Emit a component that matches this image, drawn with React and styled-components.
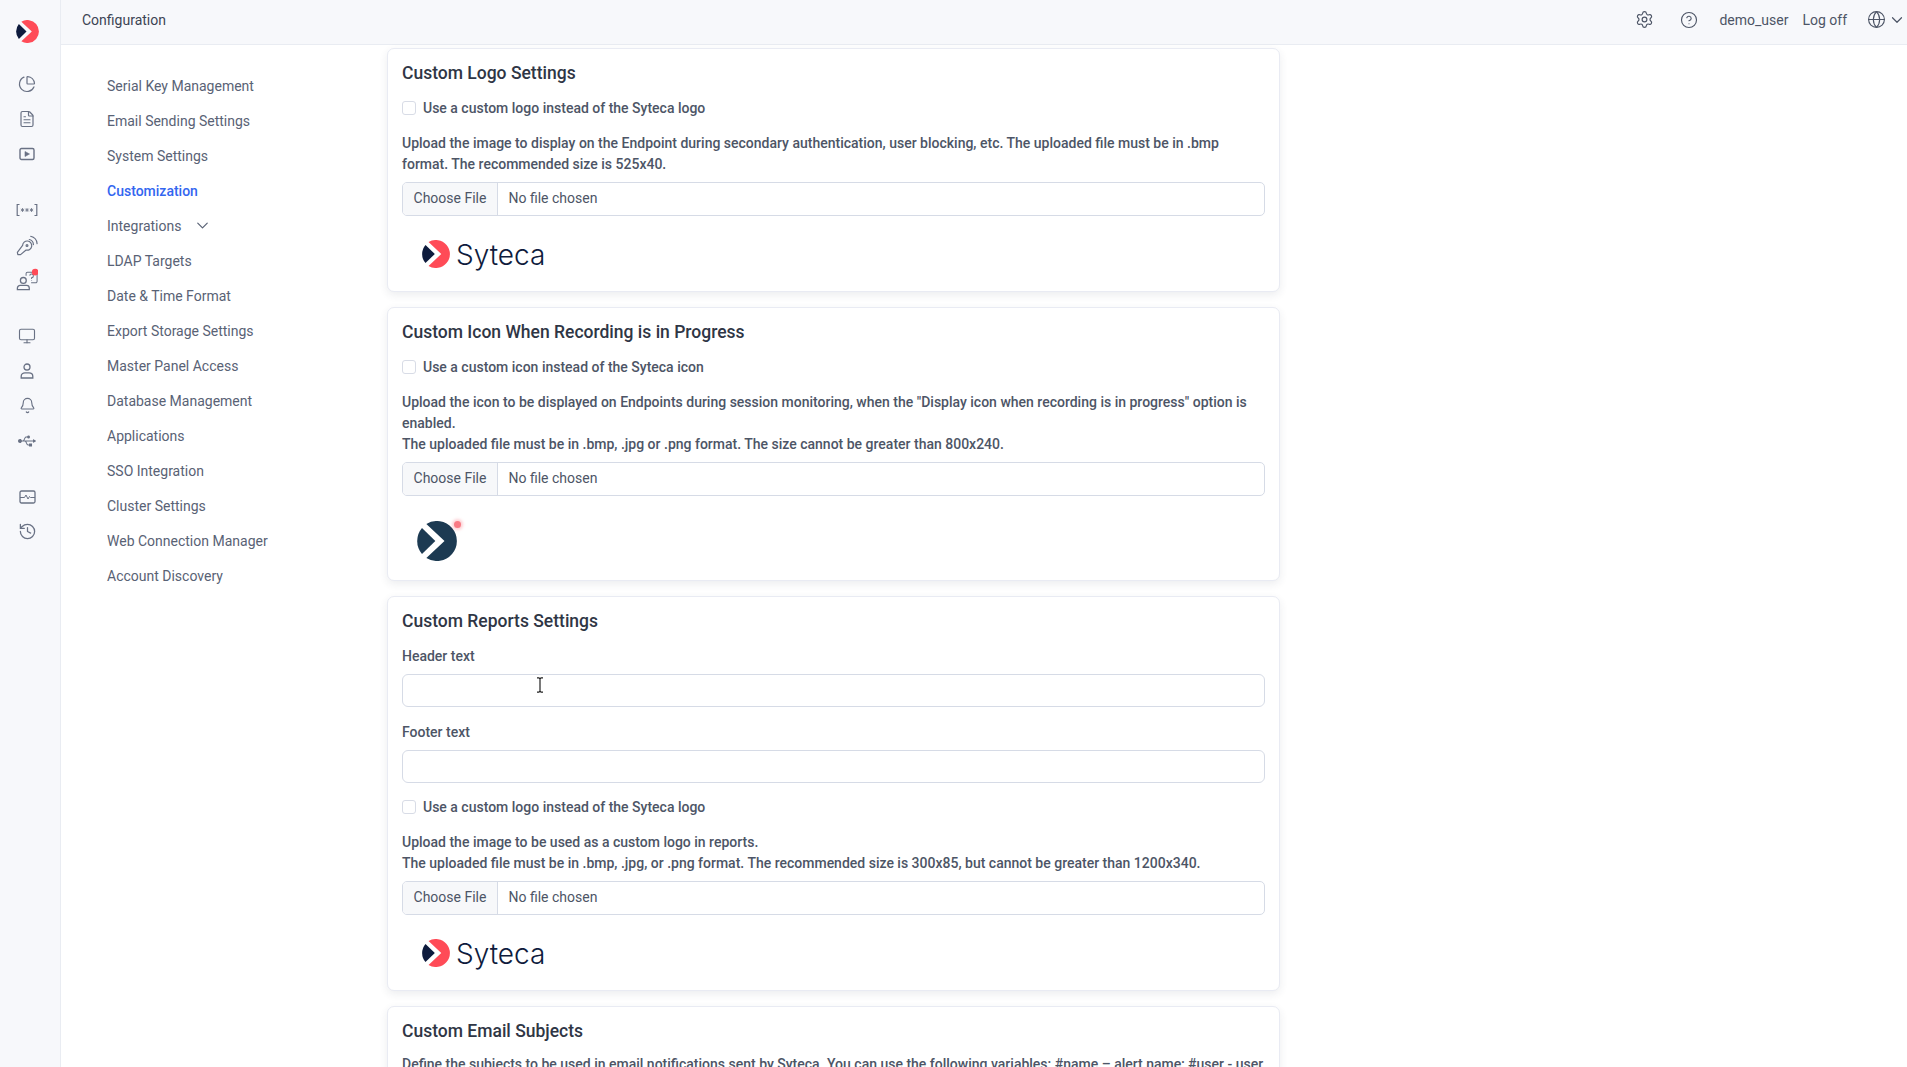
import React from "react";
import styled, { createGlobalStyle } from "styled-components";
import {
    ChartPie,
    FileText,
    Monitor,
    Bell,
    History,
    Settings,
    CircleHelp,
    Globe,
    ChevronDown,
} from "lucide-react";
import { FaUsb } from "react-icons/fa";

const GlobalStyle = createGlobalStyle`
    html, body {
        margin: 0;
        height: 100%;
        overflow: hidden;
        background: #fff;
        font-family: Roboto, "Liberation Sans", sans-serif;
        font-size: 14px;
    }
    * {
        box-sizing: border-box;
    }
`;

const Page = styled.div`
    display: flex;
    height: 100vh;
    overflow: hidden;
`;

const Sidebar = styled.aside`
    width: 61px;
    flex-shrink: 0;
    background: #f7f8fb;
    border-right: 1px solid #e9ecf2;
    padding: 20px 6px 0 0;
    display: flex;
    flex-direction: column;
    align-items: center;
`;

const SideGroup = styled.div`
    display: flex;
    flex-direction: column;
    align-items: center;
    margin-top: ${(props) => props.$top || 21}px;
`;

const SideIcon = styled.div`
    width: 30px;
    height: 35px;
    display: flex;
    align-items: center;
    justify-content: center;
    color: #697184;
`;

const Main = styled.div`
    flex: 1;
    min-width: 0;
    display: flex;
    flex-direction: column;
`;

const Header = styled.header`
    height: 45px;
    flex-shrink: 0;
    background: #f7f8fb;
    border-bottom: 1px solid #e9ecf2;
    display: flex;
    align-items: center;
    justify-content: space-between;
    padding: 0 1px 5px 21px;
    color: #3c4454;
`;

const HeaderRight = styled.div`
    display: flex;
    align-items: center;
    color: #4d5566;
`;

const HeaderIcon = styled.span`
    display: flex;
    margin-right: ${(props) => props.$right}px;
    color: #4d5566;
`;

const HeaderText = styled.span`
    margin-right: ${(props) => props.$right}px;
`;

const Body = styled.div`
    flex: 1;
    min-height: 0;
    display: flex;
`;

const Nav = styled.nav`
    width: 326px;
    flex-shrink: 0;
    padding: 23px 0 0 46px;
`;

const NavItem = styled.div`
    height: 35px;
    display: flex;
    align-items: center;
    gap: 12px;
    color: ${(props) => (props.$active ? "#3366f0" : "#596275")};
    font-weight: ${(props) => (props.$active ? 500 : 400)};
`;

const Content = styled.div`
    width: 893px;
    padding-top: 3px;
    display: flex;
    flex-direction: column;
    gap: 15px;
`;

const Card = styled.section`
    flex-shrink: 0;
    background: #fff;
    border: 1px solid #e9ebf3;
    border-radius: 7px;
    box-shadow: 0 3px 9px rgba(40, 50, 80, 0.09);
    padding: 0 14px;
`;

const Title = styled.h2`
    margin: 0;
    height: 41px;
    padding-top: 12px;
    line-height: 24px;
    font-size: 17.5px;
    font-weight: 500;
    color: #2f3645;
`;

const CheckRow = styled.label`
    height: 35px;
    margin-top: ${(props) => props.$top || 0}px;
    display: flex;
    align-items: center;
    gap: 7px;
    font-weight: 500;
    color: #4d5566;
`;

const Check = styled.input.attrs({ type: "checkbox" })`
    appearance: none;
    width: 14px;
    height: 14px;
    margin: 0;
    background: #fff;
    border: 1px solid #d8dce6;
    border-radius: 3px;
`;

const Text = styled.p`
    margin: ${(props) => props.$top || 7.5}px 0 7px;
    line-height: 21px;
    font-weight: 500;
    color: #4d5566;
`;

const FileField = styled.label`
    display: flex;
    height: 34px;
    border: 1px solid #d6dbe6;
    border-radius: 5px;
    overflow: hidden;
    color: #4d5566;
`;

const FileButton = styled.span`
    width: 95px;
    padding-bottom: 2px;
    display: flex;
    align-items: center;
    justify-content: center;
    background: #f7f8fa;
    border-right: 1px solid #d6dbe6;
`;

const FileName = styled.span`
    display: flex;
    align-items: center;
    padding: 0 0 2px 10.5px;
`;

const LogoRow = styled.div`
    height: 75.5px;
    padding: 24px 0 0 20px;
    display: flex;
    align-items: flex-start;
    gap: 6px;
`;

const LogoWord = styled.span`
    font-family: Inter, sans-serif;
    font-size: 28px;
    font-weight: 300;
    line-height: 31px;
    color: #0e1b3d;
`;

const RecordIcon = styled.div`
    position: relative;
    width: 40px;
    height: 41px;
    margin: 25.5px 0 18px 15px;
`;

const RecordDot = styled.span`
    position: absolute;
    top: 0;
    right: -4px;
    width: 7px;
    height: 7px;
    border-radius: 50%;
    background: #f97a84;
    box-shadow: 0 0 3px 2px rgba(248, 96, 108, 0.3);
`;

const FieldLabel = styled.div`
    height: 35px;
    line-height: 35px;
    margin-top: ${(props) => props.$top || 0}px;
    font-weight: 500;
    color: #4d5566;
`;

const InputWrap = styled.div`
    position: relative;
`;

const TextInput = styled.input`
    display: block;
    width: 100%;
    height: 33.5px;
    background: #fff;
    border: 1px solid #d6dbe6;
    border-radius: 6px;
    outline: none;
`;

const Cursor = styled.svg`
    position: absolute;
    left: 134px;
    top: 3px;
`;

const LogoMark = ({ size, left = "#0e1b3d", right = "#ff4b57" }) => (
    <svg width={size} height={size} viewBox="0 0 24 24">
        <path d="M3 4.2L11 12L3 19.8A12 12 0 0 1 3 4.2Z" fill={left} />
        <path d="M5.6 1.8A12 12 0 1 1 5.6 22.2L16.5 12Z" fill={right} />
    </svg>
);

const PlayIcon = () => (
    <svg width="16" height="14" viewBox="0 0 16 14" fill="none" stroke="currentColor" strokeWidth="1.4">
        <rect x="1" y="1.5" width="14" height="11" rx="1.5" />
        <path d="M6 4.5L10.5 7L6 9.5Z" fill="currentColor" strokeWidth="0.6" />
    </svg>
);

const VaultIcon = () => (
    <svg width="22" height="14" viewBox="0 0 22 14" fill="none" stroke="currentColor" strokeWidth="1.2">
        <path d="M3.5 1.5H1.2V12.5H3.5M18.5 1.5H20.8V12.5H18.5" />
        <path d="M6.5 5V9M4.8 6L8.2 8M8.2 6L4.8 8M11 5V9M9.3 6L12.7 8M12.7 6L9.3 8M15.5 5V9M13.8 6L17.2 8M17.2 6L13.8 8" strokeWidth="0.8" />
    </svg>
);

const KeyIcon = () => (
    <svg width="22" height="22" viewBox="0 0 24 24" fill="none" stroke="currentColor" strokeWidth="1.3" strokeLinejoin="round">
        <path d="M1.5 20L2 22.5L5 22.5L11 17.5A5 5 0 1 0 7.2 12.5Z" />
        <circle cx="12" cy="12.5" r="1" />
        <path d="M14.5 6A6 6 0 0 1 19 11.5M16 2.5A9 9 0 0 1 23 10.5" strokeLinecap="round" />
    </svg>
);

const AskIcon = () => (
    <svg width="22" height="23" viewBox="0 0 24 24" fill="none" stroke="currentColor" strokeWidth="1.4">
        <circle cx="8" cy="13" r="3.2" />
        <path d="M1.5 23V21.5A3 3 0 0 1 4.5 18.5H11.5A3 3 0 0 1 14.5 21.5V23Z" />
        <path d="M11 8V5.5A1.5 1.5 0 0 1 12.5 4H21.5A1.5 1.5 0 0 1 23 5.5V14A1.5 1.5 0 0 1 21.5 15.5H16.5" strokeWidth="1.1" />
        <path d="M15 7.8A2 2 0 1 1 17 10V11.5M17 13V13.6" strokeWidth="1.1" />
        <circle cx="21" cy="4" r="3.6" fill="#ff4b57" stroke="none" />
    </svg>
);

const UserIcon = () => (
    <svg width="16" height="16" viewBox="0 0 16 16" fill="none" stroke="currentColor" strokeWidth="1.3">
        <circle cx="8" cy="4" r="3" />
        <path d="M2.2 15V13.2C2.2 11 4 9.8 6 9.8H10C12 9.8 13.8 11 13.8 13.2V15Z" />
    </svg>
);

const PulseIcon = () => (
    <svg width="17" height="14" viewBox="0 0 17 14" fill="none" stroke="currentColor" strokeWidth="1.3">
        <rect x="1" y="1" width="15" height="12" rx="1.5" />
        <path d="M1 7.5H5.5L7 5L9 9L10.5 6.5L11.5 7.5H16" strokeWidth="1" />
    </svg>
);

const LogoBlock = () => (
    <LogoRow>
        <LogoMark size={28} />
        <LogoWord>Syteca</LogoWord>
    </LogoRow>
);

const FileInput = () => (
    <FileField>
        <FileButton>Choose File</FileButton>
        <FileName>No file chosen</FileName>
    </FileField>
);

const navItems = [
    "Serial Key Management",
    "Email Sending Settings",
    "System Settings",
    "Customization",
    "Integrations",
    "LDAP Targets",
    "Date & Time Format",
    "Export Storage Settings",
    "Master Panel Access",
    "Database Management",
    "Applications",
    "SSO Integration",
    "Cluster Settings",
    "Web Connection Manager",
    "Account Discovery",
];

const App = () => {
    return (
        <Page>
            <GlobalStyle />
            <Sidebar>
                <LogoMark size={23} />
                <SideGroup $top={23}>
                    <SideIcon><ChartPie size={18} strokeWidth={1.6} /></SideIcon>
                    <SideIcon><FileText size={18} strokeWidth={1.6} /></SideIcon>
                    <SideIcon><PlayIcon /></SideIcon>
                </SideGroup>
                <SideGroup>
                    <SideIcon><VaultIcon /></SideIcon>
                    <SideIcon><KeyIcon /></SideIcon>
                    <SideIcon><AskIcon /></SideIcon>
                </SideGroup>
                <SideGroup>
                    <SideIcon><Monitor size={18} strokeWidth={1.5} /></SideIcon>
                    <SideIcon><UserIcon /></SideIcon>
                    <SideIcon><Bell size={17} strokeWidth={1.6} /></SideIcon>
                    <SideIcon><FaUsb size={18} /></SideIcon>
                </SideGroup>
                <SideGroup>
                    <SideIcon><PulseIcon /></SideIcon>
                    <SideIcon><History size={19} strokeWidth={1.6} /></SideIcon>
                </SideGroup>
            </Sidebar>
            <Main>
                <Header>
                    <span>Configuration</span>
                    <HeaderRight>
                        <HeaderIcon $right={26}><Settings size={19} strokeWidth={1.5} /></HeaderIcon>
                        <HeaderIcon $right={21}><CircleHelp size={18} strokeWidth={1.5} /></HeaderIcon>
                        <HeaderText $right={14}>demo_user</HeaderText>
                        <HeaderText $right={20}>Log off</HeaderText>
                        <HeaderIcon $right={2}><Globe size={19} strokeWidth={1.4} /></HeaderIcon>
                        <HeaderIcon $right={0}><ChevronDown size={18} strokeWidth={1.6} /></HeaderIcon>
                    </HeaderRight>
                </Header>
                <Body>
                    <Nav>
                        {navItems.map((item) => (
                            <NavItem key={item} $active={item === "Customization"}>
                                {item}
                                {item === "Integrations" && <ChevronDown size={19} strokeWidth={1.5} />}
                            </NavItem>
                        ))}
                    </Nav>
                    <Content>
                        <Card>
                            <Title>Custom Logo Settings</Title>
                            <CheckRow>
                                <Check />
                                Use a custom logo instead of the Syteca logo
                            </CheckRow>
                            <Text>
                                Upload the image to display on the Endpoint during secondary authentication, user blocking, etc. The uploaded file must be in .bmp format. The recommended size is 525x40.
                            </Text>
                            <FileInput />
                            <LogoBlock />
                        </Card>
                        <Card>
                            <Title>Custom Icon When Recording is in Progress</Title>
                            <CheckRow>
                                <Check />
                                Use a custom icon instead of the Syteca icon
                            </CheckRow>
                            <Text>
                                Upload the icon to be displayed on Endpoints during session monitoring, when the "Display icon when recording is in progress" option is enabled.
                                <br />
                                The uploaded file must be in .bmp, .jpg or .png format. The size cannot be greater than 800x240.
                            </Text>
                            <FileInput />
                            <RecordIcon>
                                <LogoMark size={40} left="#1c3a52" right="#1c3a52" />
                                <RecordDot />
                            </RecordIcon>
                        </Card>
                        <Card>
                            <Title>Custom Reports Settings</Title>
                            <FieldLabel $top={0.5}>Header text</FieldLabel>
                            <InputWrap>
                                <TextInput />
                                <Cursor width="8" height="16" viewBox="0 0 8 16" fill="none" stroke="#222" strokeWidth="1.2">
                                    <path d="M1 .8H3L4 1.8L5 .8H7M4 1.8V14.2M1 15.2H3L4 14.2L5 15.2H7" />
                                </Cursor>
                            </InputWrap>
                            <FieldLabel $top={7.5}>Footer text</FieldLabel>
                            <TextInput />
                            <CheckRow $top={6}>
                                <Check />
                                Use a custom logo instead of the Syteca logo
                            </CheckRow>
                            <Text>
                                Upload the image to be used as a custom logo in reports.
                                <br />
                                The uploaded file must be in .bmp, .jpg, or .png format. The recommended size is 300x85, but cannot be greater than 1200x340.
                            </Text>
                            <FileInput />
                            <LogoBlock />
                        </Card>
                        <Card>
                            <Title>Custom Email Subjects</Title>
                            <Text $top={5.5}>
                                Define the subjects to be used in email notifications sent by Syteca. You can use the following variables: #name – alert name; #user - user
                            </Text>
                        </Card>
                    </Content>
                </Body>
            </Main>
        </Page>
    );
};

export default App;
